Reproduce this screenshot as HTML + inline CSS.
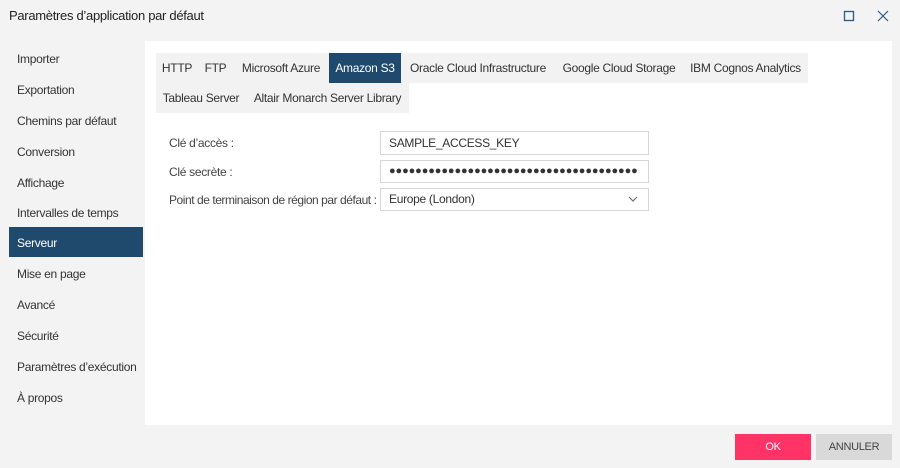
<!DOCTYPE html>
<html><head><meta charset="utf-8"><style>
*{margin:0;padding:0;box-sizing:border-box}
body{width:900px;height:468px;background:#f3f3f3;font-family:"Liberation Sans",sans-serif;font-size:12px;letter-spacing:-0.3px;color:#333;position:relative;overflow:hidden}
.a{position:absolute;white-space:nowrap}
.title{left:9px;top:8px;font-size:13px;color:#222}
.side{left:17px;color:#333}
.sel{left:9px;top:227px;width:134px;height:30px;background:#1f4a6e;color:#fff;padding:9px 8px}
.panel{left:145px;top:41px;width:747px;height:384px;background:#fff}
.tab{height:30px;background:#f2f2f2;line-height:30px;text-align:center;color:#333}
.act{background:#1f4a6e;color:#fff}
.inp{left:380px;width:269px;border:1px solid #d6d6d6;background:#fff;padding:0 8px;color:#333}
.lab{left:169px;color:#444}
</style></head><body>
<div class="a title">Paramètres d’application par défaut</div>
<svg class="a" style="left:843px;top:10px" width="12" height="12"><rect x="1.5" y="1.5" width="9" height="9" fill="none" stroke="#2b5b8a" stroke-width="1.3"/></svg>
<svg class="a" style="left:877px;top:10px" width="12" height="12"><path d="M1 1L11 11M11 1L1 11" stroke="#2b5b8a" stroke-width="1.2"/></svg>
<div class="a side" style="top:52px">Importer</div>
<div class="a side" style="top:83px">Exportation</div>
<div class="a side" style="top:114px">Chemins par défaut</div>
<div class="a side" style="top:145px">Conversion</div>
<div class="a side" style="top:176px">Affichage</div>
<div class="a side" style="top:206px">Intervalles de temps</div>
<div class="a sel">Serveur</div>
<div class="a side" style="top:267px">Mise en page</div>
<div class="a side" style="top:298px">Avancé</div>
<div class="a side" style="top:329px">Sécurité</div>
<div class="a side" style="top:360px">Paramètres d’exécution</div>
<div class="a side" style="top:391px">À propos</div>
<div class="a panel"></div>
<div class="a tab" style="left:156px;top:53px;width:42px">HTTP</div>
<div class="a tab" style="left:198px;top:53px;width:35px">FTP</div>
<div class="a tab" style="left:233px;top:53px;width:96px">Microsoft Azure</div>
<div class="a tab act" style="left:329px;top:53px;width:72px">Amazon S3</div>
<div class="a tab" style="left:401px;top:53px;width:154px">Oracle Cloud Infrastructure</div>
<div class="a tab" style="left:555px;top:53px;width:128px">Google Cloud Storage</div>
<div class="a tab" style="left:683px;top:53px;width:125px">IBM Cognos Analytics</div>
<div class="a tab" style="left:156px;top:83px;width:90px">Tableau Server</div>
<div class="a tab" style="left:246px;top:83px;width:163px">Altair Monarch Server Library</div>
<div class="a lab" style="top:136px">Clé d’accès :</div>
<div class="a lab" style="top:165px">Clé secrète :</div>
<div class="a lab" style="top:193px;letter-spacing:-0.45px">Point de terminaison de région par défaut :</div>
<div class="a inp" style="top:131px;height:24px;line-height:22px">SAMPLE_ACCESS_KEY</div>
<div class="a inp" style="top:160px;height:23px;line-height:21px;font-size:11px;letter-spacing:-0.1px;overflow:hidden">●●●●●●●●●●●●●●●●●●●●●●●●●●●●●●●●●●●●●●</div>
<div class="a inp" style="top:188px;height:23px;line-height:21px">Europe (London)</div>
<svg class="a" style="left:628px;top:196px" width="10" height="6"><path d="M1 1L5 5L9 1" fill="none" stroke="#666" stroke-width="1"/></svg>
<div class="a" style="left:735px;top:434px;width:76px;height:26px;background:#ff3366;color:#fff;text-align:center;line-height:26px;font-size:11px">OK</div>
<div class="a" style="left:816px;top:434px;width:76px;height:26px;background:#d9d9d9;color:#444;text-align:center;line-height:26px;font-size:11px">ANNULER</div>
</body></html>
